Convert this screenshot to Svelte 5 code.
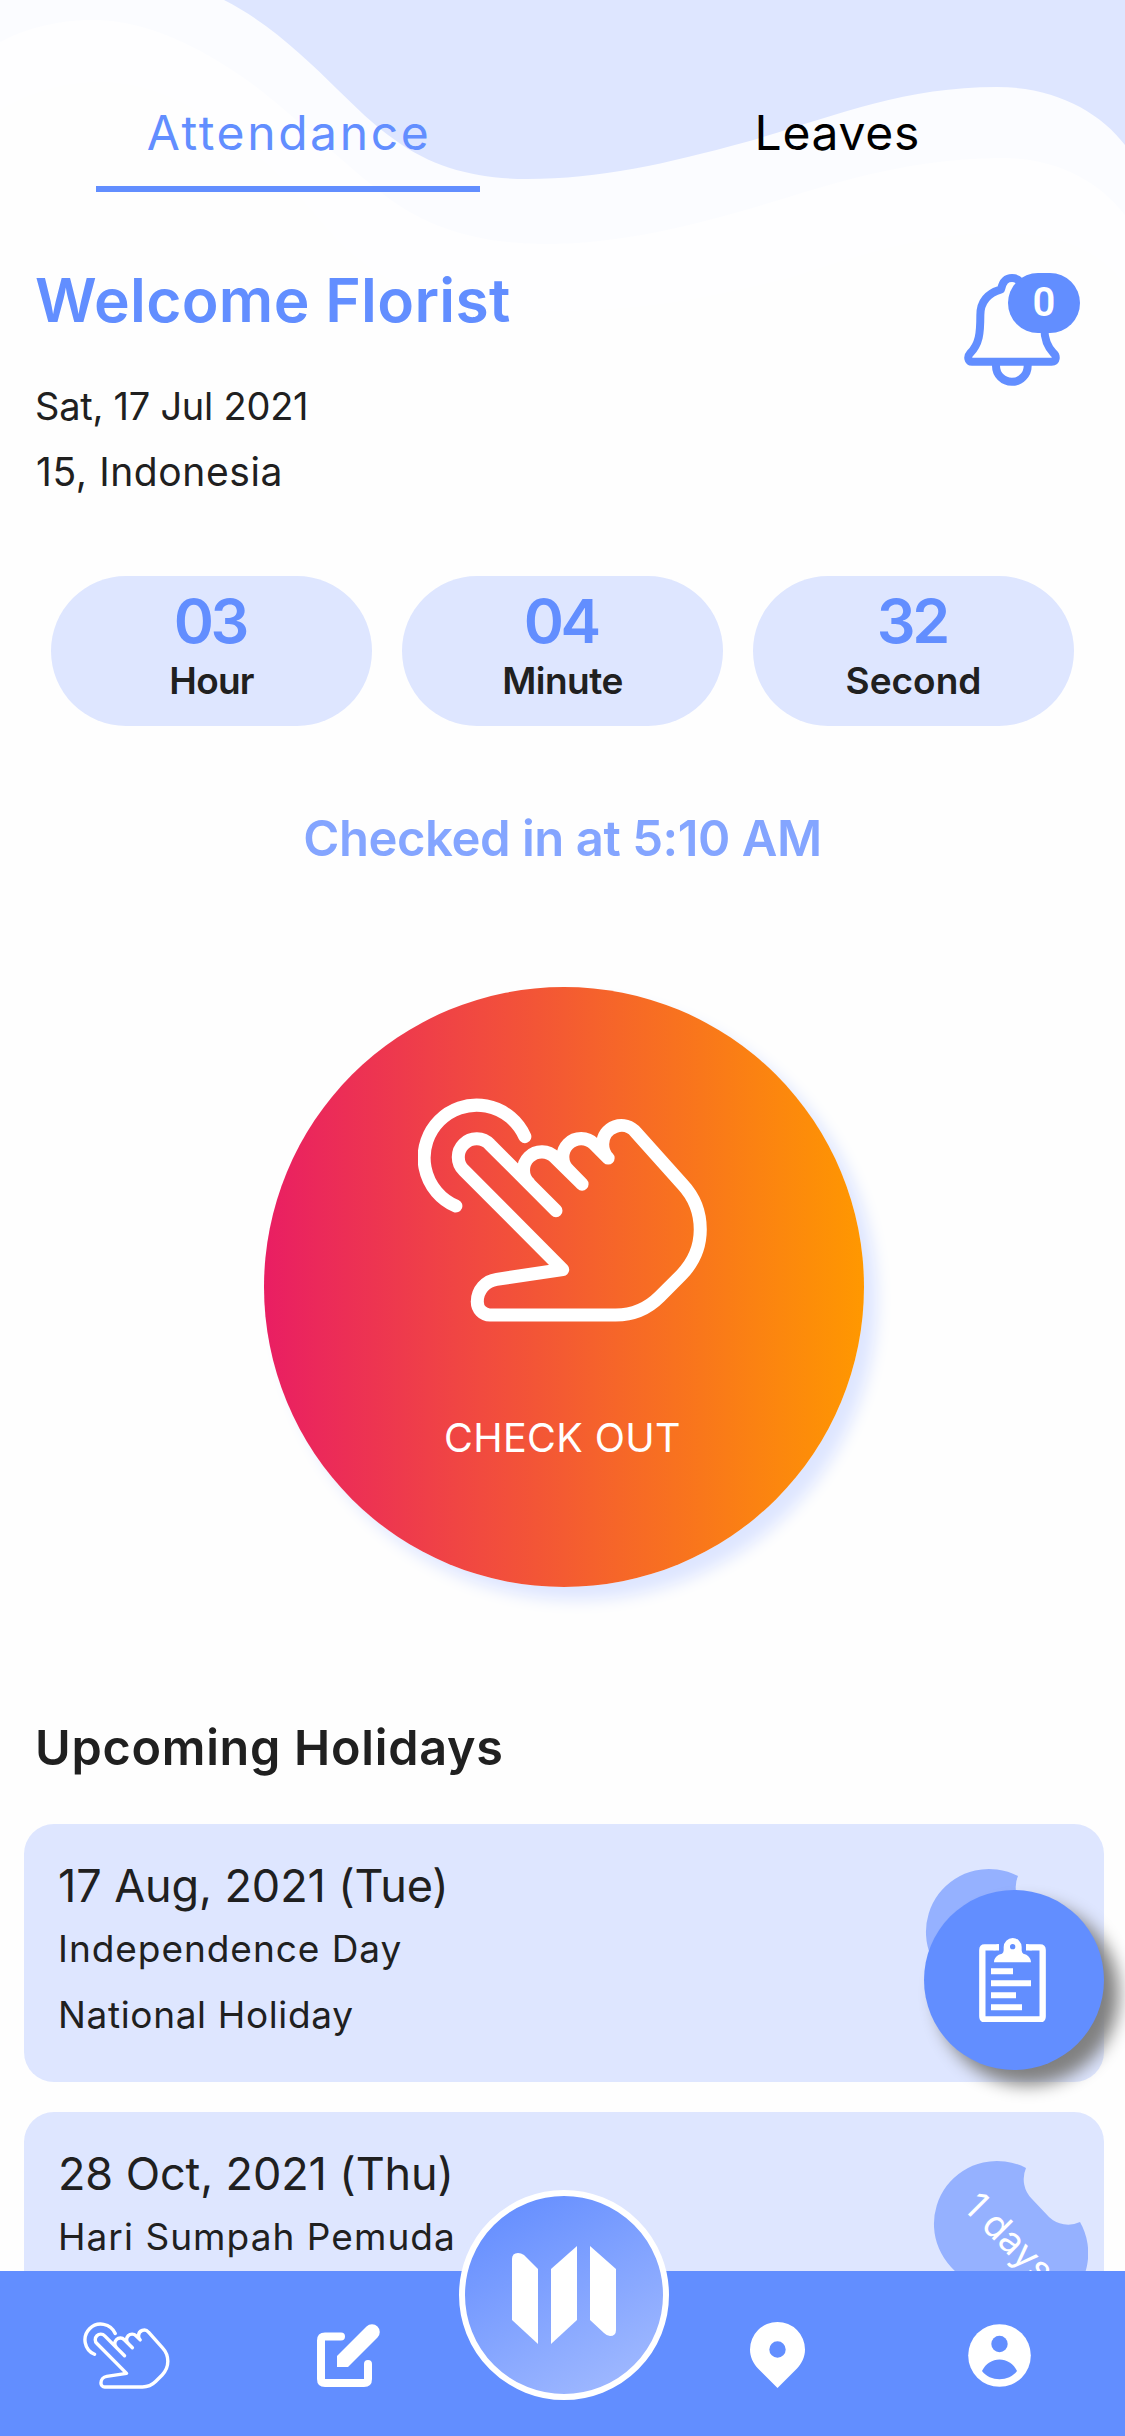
<script>
  const timer = [
    { value: '03', label: 'Hour', cls: 'hour' },
    { value: '04', label: 'Minute', cls: 'minute' },
    { value: '32', label: 'Second', cls: 'second' }
  ];
  const holidays = [
    { date: '17 Aug, 2021 (Tue)', name: 'Independence Day', type: 'National Holiday', cls: 'first' },
    { date: '28 Oct, 2021 (Thu)', name: 'Hari Sumpah Pemuda', type: '', cls: 'next' }
  ];
</script>

{#snippet hand(cls)}
  <svg class="hand {cls}" viewBox="423 329 687 531" fill="none" stroke="#fff" stroke-linecap="round" stroke-linejoin="round">
    <path d="M513 585A125 125 0 1 1 677 420" />
    <path d="M751 596L594 439A43.5 43.5 0 1 0 532 500L767 736L610 759.5A53 53 0 0 0 564 812A30 31 0 0 0 595 844H893C932 844 969 829 997 801L1049 749C1078 719 1094 681 1094 641C1094 601 1080 564 1052 534L941 410A44.5 44.5 0 0 0 862 438C862 452 868 464 875 471L842 438A43.5 43.5 0 1 0 781 500L813 533L749 470A43.5 43.5 0 1 0 687 531" />
  </svg>
{/snippet}

<div class="screen">
  <svg class="waves" viewBox="0 0 1125 320">
    <path fill="#fefeff" d="M0 0V110C30 92 65 82 100 82C185 82 260 150 320 220C365 275 420 311 550 311C640 311 700 300 789 278C860 255 925 233 997 233C1060 233 1100 250 1125 285V0Z" />
    <path fill="#fbfcff" d="M0 0V42C28 27 60 20 93 20C150 20 205 50 251 83C295 116 345 165 387 197C430 230 485 244 545 244C630 244 710 221 789 197C865 173 930 158 1004 158C1055 158 1098 180 1125 215V0Z" />
    <path fill="#dee6ff" d="M224 0C268 22 308 60 337 89C357 108 372 124 395 140C433 168 478 179 527 179C600 179 665 164 746 142C830 118 900 87 997 87C1055 87 1100 112 1125 145V0Z" />
  </svg>

  <main>
    <nav class="tabs">
      <div class="tab on"><span>Attendance</span></div>
      <div class="tab"><span>Leaves</span></div>
    </nav>

    <header>
      <div>
        <h1>Welcome Florist</h1>
        <p class="date">Sat, 17 Jul 2021</p>
        <p class="place">15, Indonesia</p>
      </div>
      <div class="bell">
        <svg viewBox="134 102 287 336" fill="none" stroke="#628eff" stroke-width="24" stroke-linejoin="round">
          <path d="M158 365H397C412 365 412 348 403 340C386 323 375 300 375 265V220C375 180 350 160 312 148C307 124 296 114 278 114C260 114 250 124 245 148C205 160 183 185 183 225C183 280 180 312 152 340C143 350 146 365 158 365Z" />
          <path d="M230 370V378A47.500 47.500 0 0 0 325 378V370" />
        </svg>
        <span class="count">0</span>
      </div>
    </header>

    <section class="timer">
      {#each timer as t}
        <div class="unit">
          <strong>{t.value}</strong>
          <span class={t.cls}>{t.label}</span>
        </div>
      {/each}
    </section>

    <p class="status">Checked in at 5:10 AM</p>

    <button class="checkout">
      {@render hand('big')}
      <span>CHECK OUT</span>
    </button>

    <h2>Upcoming Holidays</h2>
    {#each holidays as h}
      <article class={h.cls}>
        <div>
          <h3>{h.date}</h3>
          <p class="name">{h.name}</p>
          {#if h.type}<p class="type">{h.type}</p>{/if}
        </div>
        <div class="days">
          <svg viewBox="933 2159 156 157">
            <path fill="#95b1ff" d="M952 2267A63 63 0 0 1 1027 2168A28 28 0 0 0 1033 2199L1050 2217A28 28 0 0 0 1081 2222A63 63 0 0 1 982 2298Z" />
          </svg>
          {#if h.cls === 'next'}<span>1 days</span>{/if}
        </div>
      </article>
    {/each}
  </main>

  <button class="fab" aria-label="Notes">
    <svg viewBox="297 413 201 254" fill="#fff">
      <path fill="none" stroke="#fff" stroke-width="19" d="M357 441H314Q307 441 307 449V648Q307 657 315 657H480Q488 657 488 648V449Q488 441 480 441H438" />
      <path d="M350 432H357V438Q355 450 345 450H340ZM445 432H438V438Q440 450 450 450H456Z" />
      <path fill-rule="evenodd" d="M342 486C342 472 352 463 366 460Q371 457 371 450V440A27 27 0 0 1 425 440V450Q425 457 430 460C443 463 453 472 453 486ZM398 431A8 8 0 1 0 398 447A8 8 0 1 0 398 431Z" />
      <path d="M333 504h66v18h-66zM333 540h120v18h-120zM333 576h75v18h-75zM333 612h93v18h-93z" />
    </svg>
  </button>

  <footer>
    <div class="item">{@render hand('small')}</div>
    <div class="item edit">
      <svg width="63" height="63" viewBox="0 0 63 63" fill="none" stroke="#fff">
        <path stroke-width="8" stroke-linecap="round" stroke-linejoin="round" d="M24 12.5H8Q4 12.5 4 16.5V55Q4 59 8 59H47Q51 59 51 55V40" />
        <path fill="#fff" stroke="none" d="M20 32L49.500 2.500A7.500 7.500 0 0 1 60.500 13.500L31 43H20Z" />
      </svg>
    </div>
    <div class="item home">
      <div class="logo">
        <svg width="104" height="98" viewBox="512 2245 104 98" fill="#fff">
          <path d="M512 2258Q512 2252 518 2252Q521 2252 524 2254L538 2268V2343L512 2319Z" />
          <path d="M577 2245V2319L551 2343V2268Z" />
          <path d="M590 2245L616 2268V2329Q616 2335 610 2335Q607 2335 604 2332L590 2319Z" />
        </svg>
      </div>
    </div>
    <div class="item pin">
      <svg width="55" height="66" viewBox="0 0 55 66">
        <path fill="#fff" fill-rule="evenodd" d="M27.500 0A27.500 27.500 0 0 1 55 27.500C55 35 52 41 47 46.500L27.500 66L8 46.500C3 41 0 35 0 27.500A27.500 27.500 0 0 1 27.500 0ZM27.500 19.300A8.200 8.200 0 1 0 27.500 35.700A8.200 8.200 0 1 0 27.500 19.300Z" />
      </svg>
    </div>
    <div class="item user">
      <svg width="63" height="63" viewBox="0 0 63 63">
        <circle cx="31.500" cy="31.500" r="31.300" fill="#fff" />
        <circle cx="31.500" cy="20" r="8.200" fill="#628eff" />
        <path fill="#628eff" d="M14 47C21 31.500 42 31.500 49 47C41 58 22 58 14 47Z" />
      </svg>
    </div>
  </footer>
</div>

<style>
  :global(body) { background: #fefefe; }
  h1, h2, h3, p { margin: 0; font-weight: 400; white-space: nowrap; }
  button { border: 0; padding: 0; font: inherit; }
  svg { display: block; }
  .screen {
    position: relative;
    display: flex;
    flex-direction: column;
    width: 1125px;
    height: 2436px;
    overflow: hidden;
    background: #fefefe;
    color: #202020;
    font-family: Inter, 'Liberation Sans', sans-serif;
  }
  .waves { position: absolute; top: 0; left: 0; width: 1125px; height: 320px; }
  main { position: relative; flex: 1; min-height: 0; overflow: hidden; }

  .tabs { display: grid; grid-template-columns: 1fr 1fr; margin: 0 13px; padding-top: 103px; }
  .tab { width: 384px; margin: 0 auto; padding-bottom: 23px; border-bottom: 6px solid transparent; line-height: 60px; font-size: 48px; text-align: center; color: #000; letter-spacing: 0.7px; }
  .tab.on { color: #628eff; border-color: #628eff; letter-spacing: 2.6px; text-indent: 2.6px; }

  header { display: flex; justify-content: space-between; padding: 68px 45px 0 35px; }
  h1 { font-size: 60.5px; line-height: 80px; font-weight: 600; letter-spacing: 0.3px; color: #628eff; }
  .date, .place { line-height: 66px; }
  .date { margin-top: 33px; font-size: 38px; letter-spacing: -0.25px; }
  .place { font-size: 39px; letter-spacing: 0.6px; padding-left: 1px; }
  .bell { position: relative; width: 116px; height: 112px; margin-top: 14px; }
  .bell svg { width: 95.7px; height: 112px; }
  .count { position: absolute; top: -1px; left: 44px; width: 72px; height: 60px; border-radius: 30px; background: #628eff; color: #fff; font: 600 40px/60px Roboto, sans-serif; text-align: center; }

  .timer { display: grid; grid-template-columns: repeat(3, 321px); gap: 30px; justify-content: center; margin-top: 71px; }
  .unit { display: flex; flex-direction: column; align-items: center; height: 150px; border-radius: 75px; background: #dee6ff; padding-top: 15px; box-sizing: border-box; }
  .unit strong { font-size: 61px; line-height: 60px; font-weight: 600; letter-spacing: -3.4px; text-indent: -3.4px; color: #628eff; }
  .unit span { margin-top: 11px; font-size: 37px; line-height: 38px; font-weight: 600; }
  .hour { letter-spacing: -0.8px; }
  .minute { letter-spacing: -0.5px; }
  .second { letter-spacing: 0; }

  .status { margin-top: 83px; font-size: 49px; line-height: 60px; font-weight: 600; letter-spacing: -0.45px; text-align: center; color: #84a5ff; }

  .checkout { display: flex; flex-direction: column; align-items: center; width: 600px; height: 600px; margin: 118px 0 0 264px; padding: 111px 3px 0 0; box-sizing: border-box; border-radius: 50%; background: linear-gradient(90deg, #e91e63, #ff9800); box-shadow: 13px 13px 16px #dee6ff; color: #fff; }
  .checkout span { margin-top: 91px; font-size: 39.5px; line-height: 50px; letter-spacing: 0.37px; }
  .hand.big { width: 289px; height: 224px; stroke-width: 31px; }
  .hand.small { width: 87px; height: 67px; stroke-width: 27px; }

  h2 { margin: 131px 0 46px 35px; font-size: 48.5px; line-height: 60px; font-weight: 600; letter-spacing: 0.75px; }
  article { display: flex; justify-content: space-between; height: 258px; margin: 0 21px 30px 24px; padding: 32px 16px 0 34px; box-sizing: border-box; border-radius: 30px; background: #dee6ff; }
  h3 { font-size: 45px; line-height: 60px; letter-spacing: -0.1px; }
  .name, .type { line-height: 66px; font-size: 37px; }
  .name { letter-spacing: 0.95px; }
  .next .name { letter-spacing: 1.05px; }
  .type { letter-spacing: 0.65px; }
  .days { position: relative; width: 156px; height: 157px; margin-top: 15px; }
  .first .days { margin: 11px 8px 0 0; }
  .days svg { width: 156px; height: 157px; }
  .days span { position: absolute; inset: 0; font-size: 37px; line-height: 157px; text-align: center; color: #fff; transform: rotate(45deg); }

  .fab { position: absolute; left: 924px; top: 1890px; display: grid; place-items: center; width: 180px; height: 180px; padding-right: 3px; border-radius: 50%; background: #628eff; box-shadow: 14px 14px 17px 1px #808080; }
  .fab svg { width: 67px; height: 84.7px; }

  footer { position: relative; display: grid; grid-template-columns: 252px 192px 240px 187px 256px; height: 165px; background: #628eff; }
  .item { display: flex; justify-content: center; align-items: center; padding-top: 3px; }
  .home { align-items: flex-start; padding: 0; }
  .logo { display: grid; place-items: center; width: 210px; height: 210px; margin-top: -81px; box-sizing: border-box; border: 6px solid #fff; border-radius: 50%; background: linear-gradient(150deg, #668fff 10%, #a0b9ff 92%); }
</style>
